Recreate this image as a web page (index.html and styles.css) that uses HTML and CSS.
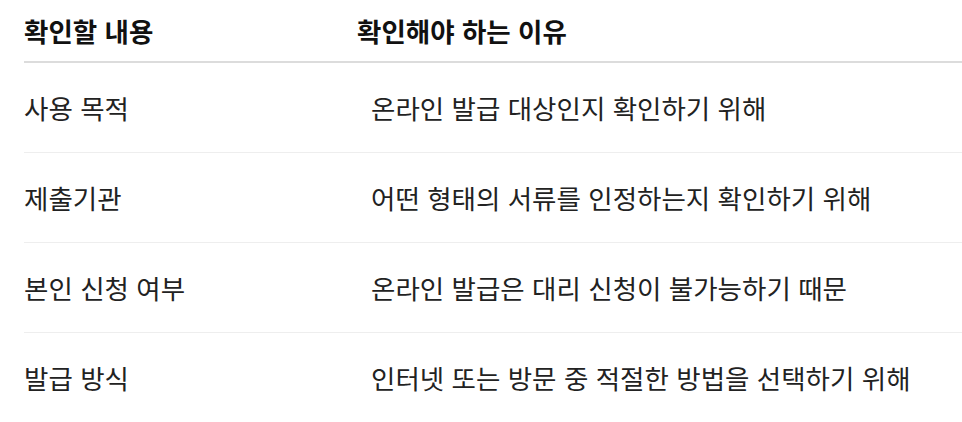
FILE: index.html
```html
<!DOCTYPE html>
<html lang="ko">
<head>
<meta charset="utf-8">
<link rel="stylesheet" href="styles.css">
</head>
<body>
<div class="table">
  <div class="row head">
    <div class="cell">확인할 내용</div>
    <div class="cell">확인해야 하는 이유</div>
  </div>
  <div class="row">
    <div class="cell">사용 목적</div>
    <div class="cell reason">온라인 발급 대상인지 확인하기 위해</div>
  </div>
  <div class="row">
    <div class="cell">제출기관</div>
    <div class="cell reason">어떤 형태의 서류를 인정하는지 확인하기 위해</div>
  </div>
  <div class="row">
    <div class="cell">본인 신청 여부</div>
    <div class="cell reason">온라인 발급은 대리 신청이 불가능하기 때문</div>
  </div>
  <div class="row last">
    <div class="cell">발급 방식</div>
    <div class="cell reason">인터넷 또는 방문 중 적절한 방법을 선택하기 위해</div>
  </div>
</div>
</body>
</html>
```
FILE: styles.css
```css
html, body {
  margin: 0;
  padding: 0;
  background: #fff;
}
body {
  font-family: "Noto Sans CJK KR", "Noto Sans", sans-serif;
  color: #222;
  padding-left: 24px;
}
.table {
  display: flex;
  flex-direction: column;
}
.row {
  display: grid;
  grid-template-columns: 333px 1fr;
  align-items: center;
  height: 89px;
  border-bottom: 1px solid #eeeeee;
  font-size: 26.5px;
}
.row.head {
  height: 61px;
  border-bottom: 2px solid #dcdcdc;
  font-weight: 700;
  color: #111;
}
.row.last {
  border-bottom: none;
}
.cell {
  white-space: nowrap;
  line-height: 1.2;
}
.reason {
  padding-left: 14px;
}
```
